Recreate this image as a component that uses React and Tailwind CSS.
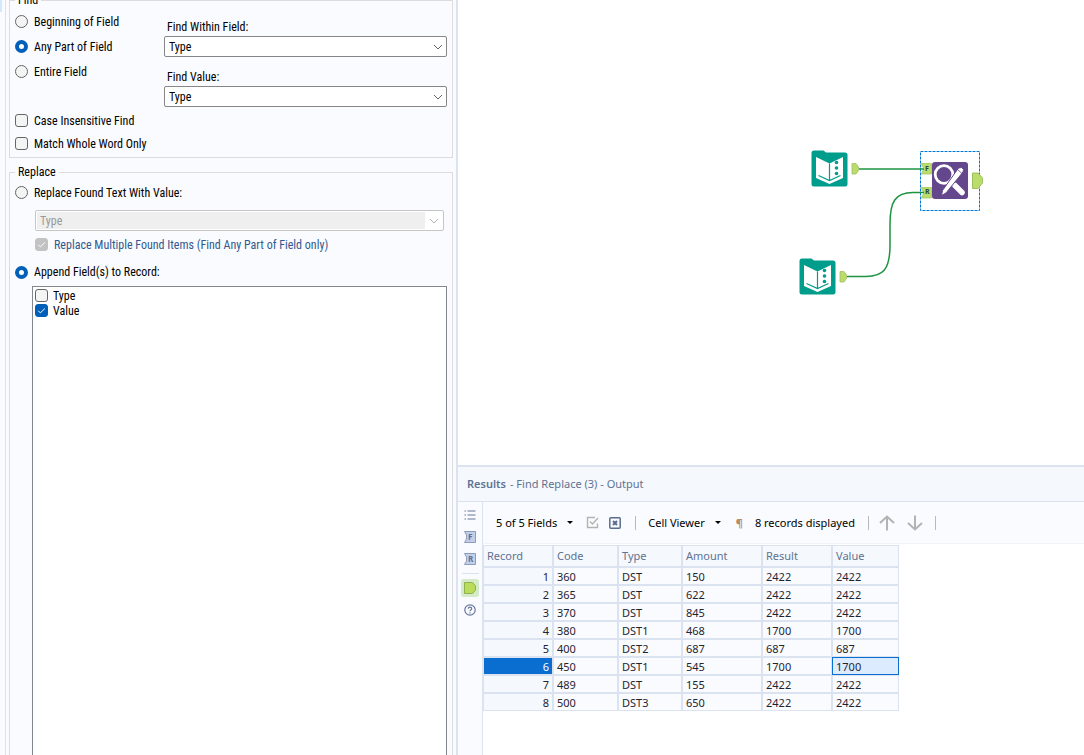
import React, { useState } from 'react'

const COLUMNS = [
  { key: 'record', label: 'Record', width: 'w-[70px]' },
  { key: 'code', label: 'Code', width: 'w-[65px]' },
  { key: 'type', label: 'Type', width: 'w-[64px]' },
  { key: 'amount', label: 'Amount', width: 'w-[80px]' },
  { key: 'result', label: 'Result', width: 'w-[70px]' },
  { key: 'value', label: 'Value', width: 'w-[67px]' },
]

const ROWS = [
  { code: '360', type: 'DST', amount: '150', result: '2422', value: '2422' },
  { code: '365', type: 'DST', amount: '622', result: '2422', value: '2422' },
  { code: '370', type: 'DST', amount: '845', result: '2422', value: '2422' },
  { code: '380', type: 'DST1', amount: '468', result: '1700', value: '1700' },
  { code: '400', type: 'DST2', amount: '687', result: '687', value: '687' },
  { code: '450', type: 'DST1', amount: '545', result: '1700', value: '1700' },
  { code: '489', type: 'DST', amount: '155', result: '2422', value: '2422' },
  { code: '500', type: 'DST3', amount: '650', result: '2422', value: '2422' },
]

const FIND_MODES = ['Beginning of Field', 'Any Part of Field', 'Entire Field']

function Radio({ name, label, checked, onChange, className }) {
  return (
    <label className={`flex items-center gap-1.5 ${className}`}>
      <input
        type="radio"
        name={name}
        checked={checked}
        onChange={onChange}
        className="size-[13px] shrink-0 appearance-none rounded-full border border-[#666] bg-[#f4f4f4] checked:border-4 checked:border-[#005fb8] checked:bg-white"
      />
      <span>{label}</span>
    </label>
  )
}

function Checkbox({ label, checked, onChange, disabled, className }) {
  return (
    <label className={`flex items-center ${className}`}>
      <span className="grid size-[13px] shrink-0">
        <input
          type="checkbox"
          checked={checked}
          onChange={onChange}
          disabled={disabled}
          className="col-start-1 row-start-1 size-[13px] appearance-none rounded-[3px] border border-[#666] bg-[#f4f4f4] checked:border-[#005fb8] checked:bg-[#005fb8] disabled:border-[#c2c2c2] disabled:bg-[#c2c2c2]"
        />
        {checked && (
          <svg viewBox="0 0 13 13" className="pointer-events-none col-start-1 row-start-1 size-[13px]" fill="none" stroke="#fff">
            <path d="M3.2 6.7 5.4 8.9 9.8 4.5" />
          </svg>
        )}
      </span>
      <span>{label}</span>
    </label>
  )
}

function Chevron({ className }) {
  return (
    <svg viewBox="0 0 16 15" className={`pointer-events-none h-[15px] w-4 self-center ${className}`} fill="none" stroke="currentColor">
      <path d="M4 6 8 10 12 6" />
    </svg>
  )
}

function FieldSelect({ id, label, value, onChange }) {
  return (
    <div>
      <label htmlFor={id} className="block h-[17px] pl-[3px] leading-4">{label}</label>
      <div className="grid h-[21px] rounded-[2px] border border-[#868686] bg-white">
        <select id={id} value={value} onChange={onChange} className="col-start-1 row-start-1 appearance-none pl-1 leading-4">
          <option>Type</option>
          <option>Value</option>
        </select>
        <Chevron className="col-start-1 row-start-1 justify-self-end text-[#666]" />
      </div>
    </div>
  )
}

function ConfigPane() {
  const [mode, setMode] = useState('Any Part of Field')
  const [within, setWithin] = useState('Type')
  const [findValue, setFindValue] = useState('Type')
  const [caseInsensitive, setCaseInsensitive] = useState(false)
  const [wholeWord, setWholeWord] = useState(false)
  const [action, setAction] = useState('append')
  const [fields, setFields] = useState({ Type: false, Value: true })

  return (
    <aside className="flex w-[458px] shrink-0 border-r-2 border-[#dbe3f1] bg-[#fafbfe] text-[12px] text-black">
      <div className="w-[6px] shrink-0 border-r border-[#dbe3f1]">
        <div className="h-3 w-[2px] bg-[#d3e8fb]" />
      </div>
      <div className="flex min-w-0 flex-1 flex-col pr-[3px] pl-[3px]">
        <fieldset className="-mt-2 border border-[#dcdcdc] px-[5px]">
          <legend className="px-[3px] leading-4">Find</legend>
          <div className="flex">
            <div className="w-[149px] shrink-0 pt-px">
              {FIND_MODES.map((m) => (
                <Radio
                  key={m}
                  name="find-mode"
                  label={m}
                  checked={mode === m}
                  onChange={() => setMode(m)}
                  className="h-[25px]"
                />
              ))}
            </div>
            <div className="flex flex-1 flex-col gap-3 pt-[11px]">
              <FieldSelect id="within" label="Find Within Field:" value={within} onChange={(e) => setWithin(e.target.value)} />
              <FieldSelect id="find-value" label="Find Value:" value={findValue} onChange={(e) => setFindValue(e.target.value)} />
            </div>
          </div>
          <Checkbox
            label="Case Insensitive Find"
            checked={caseInsensitive}
            onChange={() => setCaseInsensitive(!caseInsensitive)}
            className="mt-[2px] h-[23px] gap-1.5"
          />
          <Checkbox
            label="Match Whole Word Only"
            checked={wholeWord}
            onChange={() => setWholeWord(!wholeWord)}
            className="mb-[2px] h-[23px] gap-1.5"
          />
        </fieldset>

        <fieldset className="mt-1.5 flex flex-1 flex-col border border-b-0 border-[#dcdcdc] px-[5px]">
          <legend className="px-[3px] leading-4">Replace</legend>
          <Radio
            name="action"
            label="Replace Found Text With Value:"
            checked={action === 'replace'}
            onChange={() => setAction('replace')}
            className="h-[25px]"
          />
          <div className="mt-[5px] mr-[3px] ml-5 grid h-[21px] rounded-[2px] border border-[#c6c6c6] bg-white p-px">
            <select
              aria-label="Replacement field"
              disabled
              className="col-start-1 row-start-1 mr-[17px] appearance-none bg-[#efefef] pl-[3px] leading-4 text-[#9a9a9a] opacity-100"
            >
              <option>Type</option>
            </select>
            <Chevron className="col-start-1 row-start-1 justify-self-end text-[#b5b5b5]" />
          </div>
          <Checkbox
            label="Replace Multiple Found Items (Find Any Part of Field only)"
            checked
            disabled
            onChange={() => {}}
            className="ml-5 h-[27px] gap-1.5 text-[#31598f]"
          />
          <Radio
            name="action"
            label="Append Field(s) to Record:"
            checked={action === 'append'}
            onChange={() => setAction('append')}
            className="h-[28px]"
          />
          <div className="ml-[17px] flex-1 border border-b-0 border-[#828790] bg-white px-[2px] pt-px">
            {Object.keys(fields).map((f) => (
              <Checkbox
                key={f}
                label={f}
                checked={fields[f]}
                onChange={() => setFields({ ...fields, [f]: !fields[f] })}
                className="h-[15px] gap-[5px]"
              />
            ))}
          </div>
        </fieldset>
      </div>
    </aside>
  )
}

function InputTool({ className }) {
  return (
    <svg viewBox="0 0 49 37" className={`absolute h-[37px] w-[49px] ${className}`}>
      <path d="M3 .5H12.5L15 2.5H34Q36.5 2.5 36.5 5V34Q36.5 36.5 34 36.5H3Q.5 36.5 .5 34V3Q.5 .5 3 .5Z" fill="#009c8c" />
      <path d="M5 7 18.5 13.5 32 7V28L18.5 34 5 28Z" fill="#fff" />
      <path d="M18.5 13.5V30.5M7.5 25.5 18.5 30.5 29.5 25.5" fill="none" stroke="#009c8c" strokeWidth="1.2" />
      <g fill="#009c8c">
        <circle cx="25.5" cy="12.5" r="1.8" />
        <circle cx="25.5" cy="18" r="1.8" />
        <circle cx="25.5" cy="23.5" r="1.8" />
      </g>
      <path d="M41 13.5H45L47.5 17V20.5L45 24H41Z" fill="#b9dc6b" stroke="#9fbf62" strokeWidth=".8" />
    </svg>
  )
}

function FindReplaceTool({ className }) {
  return (
    <svg viewBox="0 0 64 60" className={`absolute h-[60px] w-[64px] ${className}`}>
      <rect x=".5" y=".5" width="59" height="59" fill="none" stroke="#0078d7" strokeDasharray="3 1" />
      <path d="M1 12.5H11.5V23H1L4 18ZM1 36.5H11.5V47H1L4 42Z" fill="#b9dc6b" stroke="#a5c763" strokeWidth=".8" />
      <path d="M0 18H4M0 41.5H4" stroke="#1c9441" strokeWidth="1.5" />
      <g fontSize="7" fontWeight="700" fill="#1f4747" fontFamily="'Noto Sans', sans-serif">
        <text x="5" y="20">F</text>
        <text x="5" y="43">R</text>
      </g>
      <rect x="12" y="11" width="36" height="37" rx="3" fill="#64468c" />
      <circle cx="24" cy="23.5" r="8.8" fill="none" stroke="#fff" strokeWidth="2.8" />
      <path d="M30 30 34 34" stroke="#fff" strokeWidth="2.5" />
      <path d="M35 34.5 42 41.5" stroke="#fff" strokeWidth="5.5" strokeLinecap="round" />
      <path d="M38.5 17 41.5 16.5 43.5 18.5 43 21 26 42 21.5 44.5 22.5 39.5Z" fill="#fff" stroke="#64468c" />
      <path d="M37.5 18.5 42 22.5" stroke="#64468c" strokeWidth=".8" />
      <path d="M52.5 22H58L62.5 27V32L58 37.5H52.5Z" fill="#b9dc6b" stroke="#9fbf62" />
    </svg>
  )
}

function Canvas() {
  return (
    <section aria-label="Workflow canvas" className="relative h-[465px] shrink-0 overflow-hidden bg-white">
      <svg className="absolute inset-0 h-full w-full" fill="none" stroke="#1c9441" strokeWidth="1.5">
        <path d="M401 169H463" />
        <path d="M389 276.5H408C425 276 432 270 432 245V224C432 202 437 192.5 455 192.5H463" />
      </svg>
      <InputTool className="top-[150px] left-[353px]" />
      <InputTool className="top-[258px] left-[341px]" />
      <FindReplaceTool className="top-[151px] left-[462px]" />
    </section>
  )
}

function AnchorIcon({ letter }) {
  return (
    <svg viewBox="0 0 12 12" className="size-3">
      <path d="M.5 .5H11.5V11.5H.5L2.5 8V4Z" fill="#c3cfe6" stroke="#8a9cc0" />
      <text x="4" y="9" fontSize="8" fontWeight="700" fill="#5a6f9c" fontFamily="'Noto Sans', sans-serif">{letter}</text>
    </svg>
  )
}

function ResultsRail() {
  return (
    <nav aria-label="Results views" className="flex w-[25px] shrink-0 flex-col items-center border-r border-[#dbe3f1] bg-[#fafbfe] pt-[2px]">
      <button aria-label="Messages" className="grid h-[22px] place-items-center">
        <svg viewBox="0 0 12 10" className="h-[10px] w-3" stroke="#66779b" strokeWidth="1.2">
          <path d="M3.5 1H11.5M3.5 5H11.5M3.5 9H11.5M.5 1H2M.5 5H2M.5 9H2" />
        </svg>
      </button>
      <button aria-label="F input" className="grid h-[22px] place-items-center"><AnchorIcon letter="F" /></button>
      <button aria-label="R input" className="grid h-[22px] place-items-center"><AnchorIcon letter="R" /></button>
      <hr className="mt-[3px] mb-[5px] w-[17px] border-[#dbe3f1]" />
      <button aria-label="Output" className="grid size-[18px] place-items-center rounded-[3px] bg-[#d5eac8]">
        <svg viewBox="0 0 12 12" className="size-3">
          <path d="M.5 .5H8.5L11.5 4V8L8.5 11.5H.5Z" fill="#b9dc5b" stroke="#8cb04c" />
        </svg>
      </button>
      <button aria-label="Help" className="mt-[2px] grid h-[22px] place-items-center">
        <svg viewBox="0 0 12 12" className="size-3" fill="none" stroke="#66779b" strokeWidth="1.2">
          <circle cx="6" cy="6" r="5.2" />
          <path d="M4.3 4.7C4.3 2.6 7.7 2.6 7.7 4.7 7.7 5.8 6 5.8 6 7.3M6 8.3V9.4" />
        </svg>
      </button>
    </nav>
  )
}

function Caret() {
  return (
    <svg viewBox="0 0 6 3" className="h-[3px] w-[6px]">
      <path d="M0 0H6L3 3Z" fill="#000" />
    </svg>
  )
}

function Divider() {
  return <span className="h-[14px] w-px bg-[#b9b9b9]" />
}

function ResultsToolbar() {
  return (
    <div className="flex h-[42px] items-center border-b border-[#f0f2f6] bg-[#fafbfe] pl-[13px] text-black">
      <button className="flex items-center gap-[10px]">5 of 5 Fields <Caret /></button>
      <button aria-label="Select fields" className="ml-[13px]">
        <svg viewBox="0 0 13 13" className="size-[13px]" fill="none" stroke="#b3b3b3" strokeWidth="1.4">
          <path d="M11.5 7.5V11.5H1.5V1.5H9M4 5.5 6.5 8 12 2" />
        </svg>
      </button>
      <button aria-label="Clear fields" className="ml-[10px]">
        <svg viewBox="0 0 12 12" className="size-3" fill="none" stroke="#5b6d8e">
          <rect x=".8" y=".8" width="10.4" height="10.4" rx="1" strokeWidth="1.5" />
          <path d="M4 4 8 8M8 4 4 8" strokeWidth="2" />
        </svg>
      </button>
      <span className="ml-[14px] flex"><Divider /></span>
      <button className="ml-3 flex items-center gap-[10px]">Cell Viewer <Caret /></button>
      <button aria-label="Show whitespace" className="ml-[15px] font-bold text-[#b98a66]">¶</button>
      <span className="ml-3">8 records displayed</span>
      <span className="ml-[13px] flex"><Divider /></span>
      <button aria-label="Previous" className="ml-[10px]">
        <svg viewBox="0 0 16 16" className="size-4" fill="none" stroke="#b3b3b3" strokeWidth="2">
          <path d="M8 15.5V1.5M1 8 8 1.5 15 8" />
        </svg>
      </button>
      <button aria-label="Next" className="ml-3">
        <svg viewBox="0 0 16 16" className="size-4" fill="none" stroke="#b3b3b3" strokeWidth="2">
          <path d="M8 .5V14.5M1 8 8 14.5 15 8" />
        </svg>
      </button>
      <span className="ml-3 flex"><Divider /></span>
    </div>
  )
}

function ResultsTable() {
  const [selected, setSelected] = useState({ row: 5, key: 'value' })

  return (
    <table className="mt-px w-[416px] table-fixed border-separate border-spacing-0 text-left text-[#1f2430]">
      <thead>
        <tr className="h-[22px]">
          {COLUMNS.map((c) => (
            <th key={c.key} className={`border border-[#dbe3f1] bg-[#f5f8fd] px-[3px] py-0 font-normal text-[#5f7292] ${c.width}`}>
              {c.label}
            </th>
          ))}
        </tr>
      </thead>
      <tbody className="leading-[14px]">
        {ROWS.map((row, i) => (
          <tr key={row.code} className="h-[18px]">
            <th
              scope="row"
              className={`border border-[#dbe3f1] px-[3px] pt-[2px] pb-0 text-right font-normal ${
                i === selected.row ? 'bg-[#0a6ed1] text-white' : 'bg-[#f5f8fd]'
              }`}
            >
              {i + 1}
            </th>
            {COLUMNS.slice(1).map((c) => (
              <td
                key={c.key}
                onClick={() => setSelected({ row: i, key: c.key })}
                className={`border px-[3px] pt-[2px] pb-0 ${
                  i === selected.row && c.key === selected.key
                    ? 'border-[#0a6ed1] bg-[#dcecfe]'
                    : 'border-[#dbe3f1] bg-[#fafbfe]'
                }`}
              >
                {row[c.key]}
              </td>
            ))}
          </tr>
        ))}
      </tbody>
    </table>
  )
}

function ResultsPane() {
  return (
    <section className="flex min-h-0 flex-1 flex-col border-t-2 border-[#dbe3f1] bg-white font-['Noto_Sans',sans-serif] text-[11px] leading-4">
      <h2 className="flex h-[35px] shrink-0 items-center gap-1 border-b border-[#dbe3f1] bg-[#f5f8fd] pl-[9px] text-[#5f7292]">
        <b className="font-semibold">Results</b>
        <span>- Find Replace (3) - Output</span>
      </h2>
      <div className="flex min-h-0 flex-1">
        <ResultsRail />
        <div className="min-w-0 flex-1">
          <ResultsToolbar />
          <ResultsTable />
        </div>
      </div>
    </section>
  )
}

export default function App() {
  return (
    <div className="flex h-screen overflow-hidden bg-white font-['Roboto_Condensed','Liberation_Sans',sans-serif]">
      <ConfigPane />
      <main className="flex min-w-0 flex-1 flex-col">
        <Canvas />
        <ResultsPane />
      </main>
    </div>
  )
}
